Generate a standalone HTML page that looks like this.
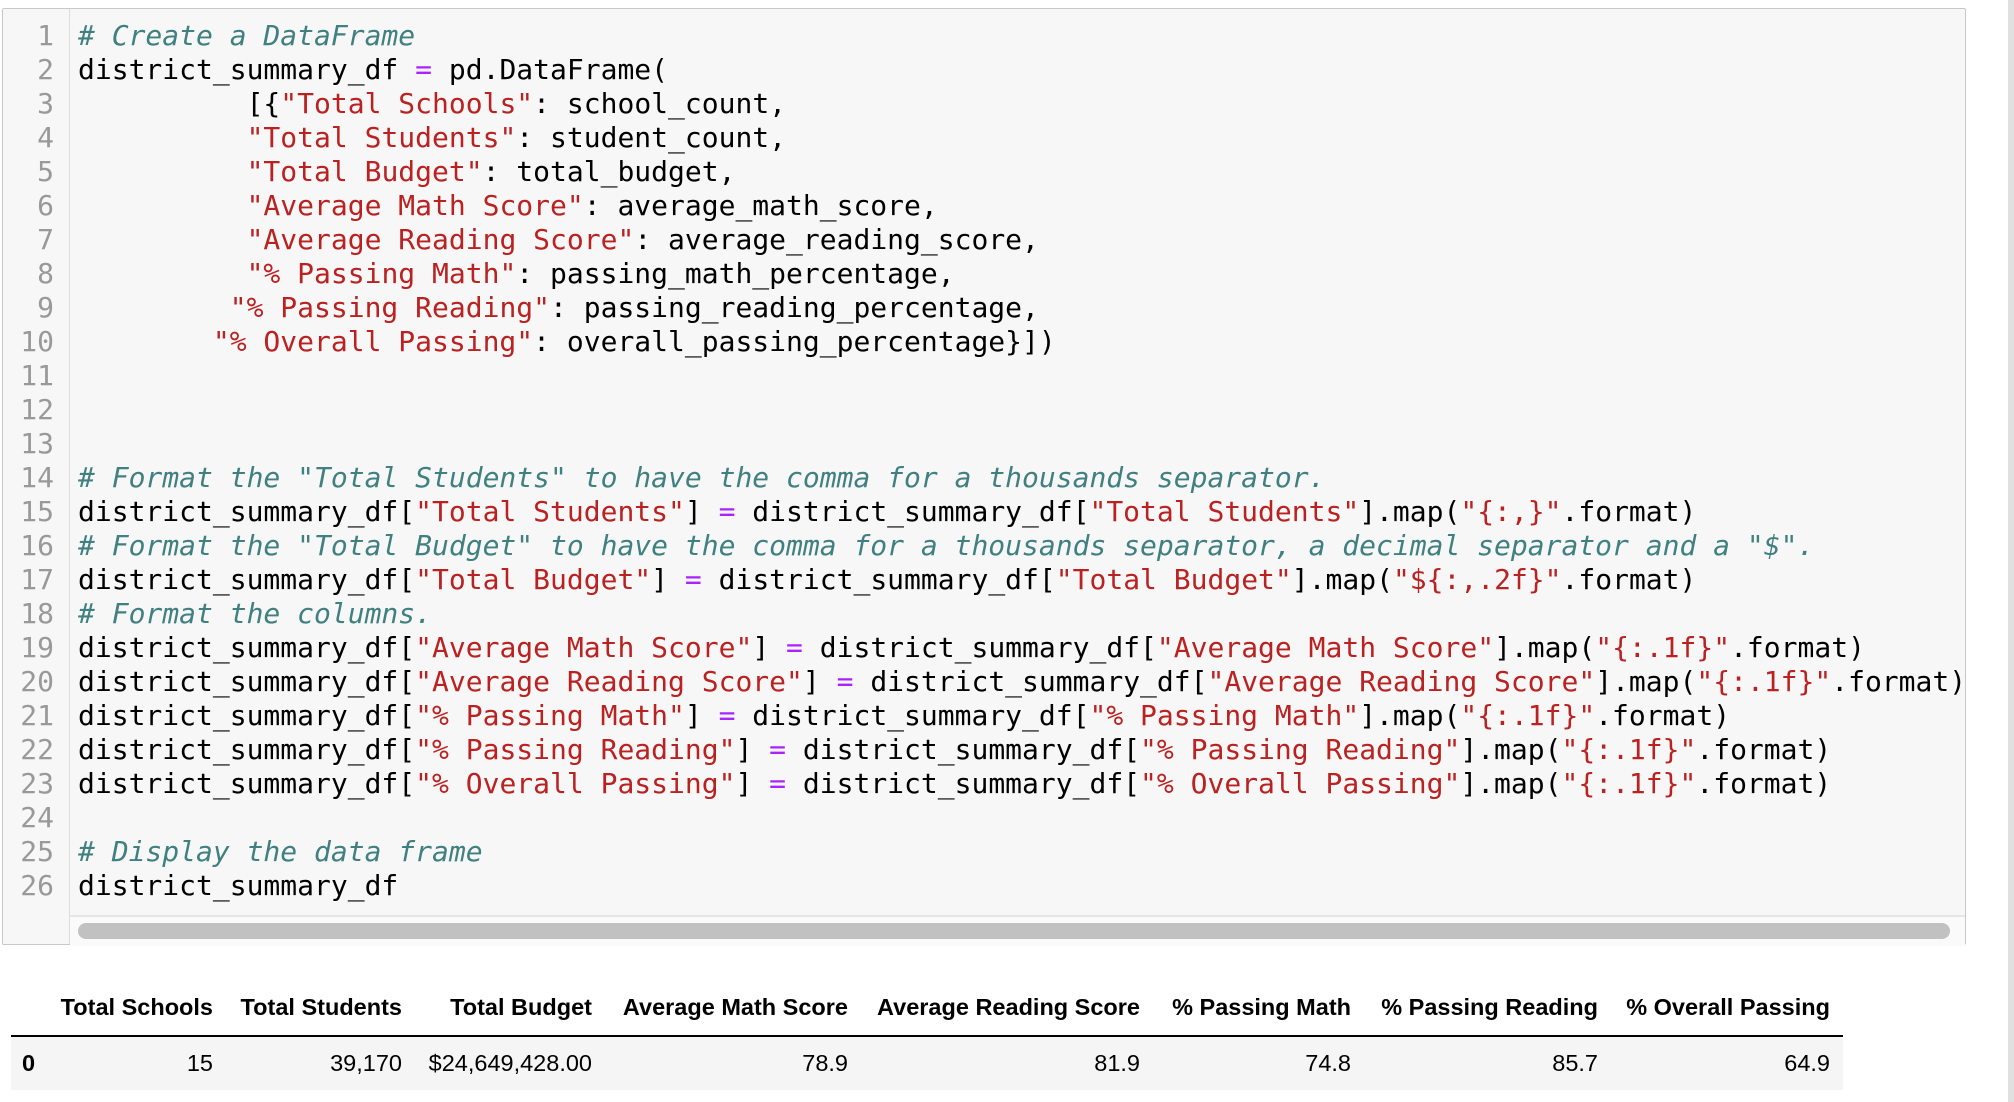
<!DOCTYPE html>
<html><head><meta charset="utf-8"><style>
body{margin:0;width:2014px;height:1102px;background:#fff;position:relative;overflow:hidden;font-family:"Liberation Sans",Arial,sans-serif}
.ed{position:absolute;left:2px;top:8px;width:1964px;height:937px;border:1px solid #c8c8c8;border-radius:2px;background:#f7f7f7;box-sizing:border-box}
.gut{position:absolute;left:0;top:0;width:66px;height:100%;border-right:1px solid #ddd;background:#f7f7f7}
pre{margin:0;font-family:"DejaVu Sans Mono","Liberation Mono",monospace;font-size:28px;line-height:34px;position:absolute;top:10px;white-space:pre;color:#000}
.ln{left:0;width:51px;text-align:right;color:#999}
.code{left:75px}
.c{color:#408080;font-style:italic}.s{color:#BA2121}.o{color:#AA22FF}
.track{position:absolute;left:67px;right:0;top:906px;height:29px;border-top:2px solid #e6e6e6;background:#fafafa}
.thumb{position:absolute;left:8px;width:1872px;top:6px;height:16px;border-radius:8px;background:#c1c1c1}
.side{position:absolute;left:2008px;top:0;width:6px;height:1102px;background:#e0e0e0}
.h,.v{position:absolute;font-size:23.5px;white-space:nowrap}
.h{font-weight:bold;top:994px}
.v{top:1050px}
.rule{position:absolute;left:11px;width:1832px;top:1035px;height:2px;background:#000}
.row{position:absolute;left:11px;width:1832px;top:1037px;height:53px;background:#f5f5f5}
</style></head><body>
<div class="side"></div>
<div class="ed">
<div class="gut"></div>
<pre class="ln">1
2
3
4
5
6
7
8
9
10
11
12
13
14
15
16
17
18
19
20
21
22
23
24
25
26</pre>
<pre class="code"><span class="c"># Create a DataFrame</span>
district_summary_df <span class="o">=</span> pd.DataFrame(
          [{<span class="s">"Total Schools"</span>: school_count,
          <span class="s">"Total Students"</span>: student_count,
          <span class="s">"Total Budget"</span>: total_budget,
          <span class="s">"Average Math Score"</span>: average_math_score,
          <span class="s">"Average Reading Score"</span>: average_reading_score,
          <span class="s">"% Passing Math"</span>: passing_math_percentage,
         <span class="s">"% Passing Reading"</span>: passing_reading_percentage,
        <span class="s">"% Overall Passing"</span>: overall_passing_percentage}])



<span class="c"># Format the "Total Students" to have the comma for a thousands separator.</span>
district_summary_df[<span class="s">"Total Students"</span>] <span class="o">=</span> district_summary_df[<span class="s">"Total Students"</span>].map(<span class="s">"{:,}"</span>.format)
<span class="c"># Format the "Total Budget" to have the comma for a thousands separator, a decimal separator and a "$".</span>
district_summary_df[<span class="s">"Total Budget"</span>] <span class="o">=</span> district_summary_df[<span class="s">"Total Budget"</span>].map(<span class="s">"${:,.2f}"</span>.format)
<span class="c"># Format the columns.</span>
district_summary_df[<span class="s">"Average Math Score"</span>] <span class="o">=</span> district_summary_df[<span class="s">"Average Math Score"</span>].map(<span class="s">"{:.1f}"</span>.format)
district_summary_df[<span class="s">"Average Reading Score"</span>] <span class="o">=</span> district_summary_df[<span class="s">"Average Reading Score"</span>].map(<span class="s">"{:.1f}"</span>.format)
district_summary_df[<span class="s">"% Passing Math"</span>] <span class="o">=</span> district_summary_df[<span class="s">"% Passing Math"</span>].map(<span class="s">"{:.1f}"</span>.format)
district_summary_df[<span class="s">"% Passing Reading"</span>] <span class="o">=</span> district_summary_df[<span class="s">"% Passing Reading"</span>].map(<span class="s">"{:.1f}"</span>.format)
district_summary_df[<span class="s">"% Overall Passing"</span>] <span class="o">=</span> district_summary_df[<span class="s">"% Overall Passing"</span>].map(<span class="s">"{:.1f}"</span>.format)

<span class="c"># Display the data frame</span>
district_summary_df</pre>
<div class="track"><div class="thumb"></div></div>
</div>

<div class="row"></div>
<div class="rule"></div>
<div class="h" style="right:1801px">Total Schools</div>
<div class="h" style="right:1612px">Total Students</div>
<div class="h" style="right:1422px">Total Budget</div>
<div class="h" style="right:1166px">Average Math Score</div>
<div class="h" style="right:874px">Average Reading Score</div>
<div class="h" style="right:663px">% Passing Math</div>
<div class="h" style="right:416px">% Passing Reading</div>
<div class="h" style="right:184px">% Overall Passing</div>

<div class="v" style="left:22px;font-weight:bold">0</div>
<div class="v" style="right:1801px">15</div>
<div class="v" style="right:1612px">39,170</div>
<div class="v" style="right:1422px">$24,649,428.00</div>
<div class="v" style="right:1166px">78.9</div>
<div class="v" style="right:874px">81.9</div>
<div class="v" style="right:663px">74.8</div>
<div class="v" style="right:416px">85.7</div>
<div class="v" style="right:184px">64.9</div>
</body></html>
